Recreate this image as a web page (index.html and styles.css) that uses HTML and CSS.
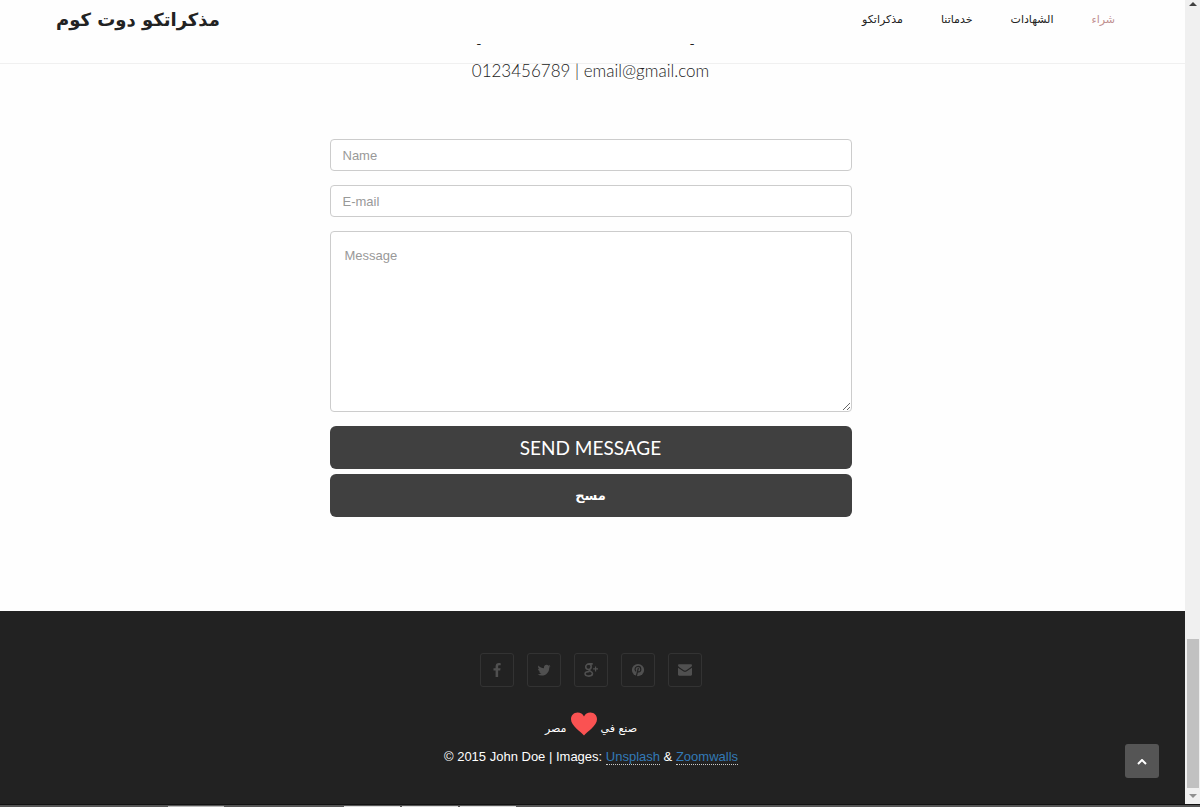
FILE: index.html
```html
<!DOCTYPE html>
<html lang="en">
<head>
  <meta charset="UTF-8" />
  <meta name="viewport" content="width=device-width, initial-scale=1" />
  <title>مذكراتكو دوت كوم</title>
  <link rel="stylesheet" href="styles.css">
</head>
<body>

  <div class="viewport">
    <div class="page">
      <header class="navbar">
        <a class="brand" href="#" lang="ar" dir="rtl">مذكراتكو دوت كوم</a>
        <nav lang="ar">
          <a href="#home">مذكراتكو</a>
          <a href="#services">خدماتنا</a>
          <a href="#testimonials">الشهادات</a>
          <a href="#buy" class="active">شراء</a>
        </nav>
        <div class="marks"><span>-</span><span>-</span></div>
      </header>

      <main class="contact">
        <p class="details">0123456789 | email@gmail.com</p>
        <form class="contact-form">
          <input type="text" class="field" placeholder="Name" aria-label="Name" />
          <input type="email" class="field" placeholder="E-mail" aria-label="E-mail" />
          <textarea class="field message" placeholder="Message" aria-label="Message"></textarea>
          <div class="buttons">
            <button type="submit" class="btn">SEND MESSAGE</button>
            <button type="reset" class="btn btn-clear" lang="ar">مسح</button>
          </div>
        </form>
      </main>

      <footer class="footer">
        <div class="social">
          <a href="#" aria-label="Facebook">
            <svg viewBox="0 0 16 16"><path d="M12.200.2v2.500h-1.500c-1.200 0-1.400.6-1.400 1.400v1.800h2.800l-.4 2.800H9.300V16H6.400V8.700H4V5.900h2.400V3.800C6.400 1.400 7.900 0 10 0c1 0 1.900.1 2.200.2z"/></svg>
          </a>
          <a href="#" aria-label="Twitter">
            <svg viewBox="0 0 16 16"><path d="M15.500 3.700c-.4.600-.9 1.100-1.500 1.500v.4c0 4-3 8.700-8.700 8.700-1.700 0-3.300-.5-4.700-1.300 1.600.2 3.200-.3 4.500-1.300-1.300 0-2.400-.9-2.800-2.100.5.100.9.100 1.400-.1-1.400-.3-2.500-1.500-2.500-3 .4.200.9.400 1.400.4C1.300 6 .9 4.200 1.700 2.800c1.500 1.900 3.800 3.100 6.300 3.200C7.500 4 9 2.100 11 2.100c.9 0 1.700.4 2.200 1 .7-.1 1.400-.4 1.900-.7-.2.700-.7 1.300-1.300 1.700.6-.1 1.200-.2 1.700-.4z"/></svg>
          </a>
          <a href="#" aria-label="Google Plus">
            <svg viewBox="0 0 16 16"><path fill="none" stroke="currentColor" stroke-width="1.800" d="M10 1H6C3.600 1 2 2.500 2 4.400s1.300 3 3.100 3 3.100-1.200 3.100-3C8.200 2.600 7.400 1.200 6 1M5.800 7.400c-1 1.700 3.900 1.900 3.900 4.700 0 1.800-1.600 2.900-4.100 2.900S1.200 14 1.200 12.400c0-1.900 2-2.700 5-2.700"/><path d="M12.500 4h1.400v2.100H16v1.400h-2.100v2.100h-1.400V7.500h-2.100V6.100h2.100z"/></svg>
          </a>
          <a href="#" aria-label="Pinterest">
            <svg viewBox="0 0 16 16"><circle cx="8" cy="8" r="7"/><path fill="none" stroke="#222" stroke-width="1.400" stroke-linecap="round" d="M5.300 9C3.500 6.300 5.500 3.900 8.300 3.900c3.800 0 3.800 6.300.5 6.300-1 0-1.400-.8-1.400-.8M8.300 6.200L6.300 14.500"/></svg>
          </a>
          <a href="#" aria-label="Email">
            <svg viewBox="0 0 16 16"><path d="M1.300 1.500h13.400c.7 0 1.300.5 1.300 1.200 0 .8-.6 1.500-1.200 2L9.500 8.300c-.9.700-2.100.7-3 0L1.200 4.700C.6 4.200 0 3.500 0 2.700c0-.7.600-1.200 1.300-1.200zM0 5.300l6 4.200c1.200.8 2.800.8 4 0l6-4.200v7.900c0 .8-.6 1.300-1.300 1.300H1.300C.6 14.500 0 14 0 13.200z"/></svg>
          </a>
        </div>
        <p class="made" lang="ar" dir="rtl">
          <span>صنع في</span>
          <svg class="heart" viewBox="0 0 26 23"><path d="M13 23C10 19 0 13.500 0 6.700 0 2.800 2.900 0 6.600 0 9.500 0 11.800 1.400 13 4 14.200 1.400 16.500 0 19.400 0 23.100 0 26 2.800 26 6.700 26 13.500 16 19 13 23z"/></svg>
          <span>مصر</span>
        </p>
        <p class="copyright">© 2015 John Doe | Images: <a href="#">Unsplash</a> &amp; <a href="#">Zoomwalls</a></p>
        <button class="to-top" aria-label="Back to top">
          <svg viewBox="0 0 10 6"><path d="M1 5l4-4 4 4"/></svg>
        </button>
      </footer>
    </div>

    <div class="scrollbar">
      <svg class="arrow" viewBox="0 0 8 5"><path d="M0 5l4-4 4 4z"/></svg>
      <div class="track"><div class="thumb"></div></div>
      <svg class="arrow down" viewBox="0 0 8 5"><path d="M0 0l4 4 4-4z"/></svg>
    </div>
  </div>

  <div class="taskbar">
    <span class="tab"></span>
    <span class="tab open"></span>
    <span class="tab open"></span>
    <span class="tab open"></span>
  </div>

</body>
</html>
```

FILE: styles.css
```css
* {
  margin: 0; padding: 0; box-sizing: border-box;
}

body {
  min-height: 100vh;
  display: flex;
  flex-direction: column;
  background: #fefefe;
  font-family: 'Liberation Sans', 'DejaVu Sans', sans-serif;
  font-size: 13px;
  color: #222;
}

.viewport {
  flex: 1;
  display: flex;
}

.page {
  flex: 1;
  display: flex;
  flex-direction: column;
}

/* Top bar */
.navbar {
  display: grid;
  grid-template-columns: 1fr auto;
  grid-template-rows: 38px 12px;
  align-items: center;
  padding: 0 70px 13px 56px;
  border-bottom: 1px solid #f0f0f0;
  font-family: 'DejaVu Sans', sans-serif;
}

.navbar a {
  text-decoration: none;
  color: #222;
}

.brand {
  justify-self: start;
  font-size: 18px;
  font-weight: 700;
}

.navbar nav {
  display: flex;
  gap: 38px;
}

.navbar nav a {
  font-size: 11px;
}

.navbar nav a.active {
  color: #c09090;
}

.marks {
  grid-column: 1 / -1;
  justify-self: center;
  width: 218px;
  display: flex;
  justify-content: space-between;
  line-height: 12px;
}

/* Contact form */
.contact {
  display: flex;
  flex-direction: column;
  align-items: center;
  padding: 0 19px 94px 15px;
}

.details {
  font-family: Lato, sans-serif;
  font-size: 17px;
  font-weight: 300;
  line-height: 14px;
  margin-bottom: 61px;
}

.contact-form {
  width: 100%;
  max-width: 522px;
  display: flex;
  flex-direction: column;
  gap: 14px;
}

.field {
  width: 100%;
  height: 32px;
  padding: 4px 12px;
  border: 1px solid #ccc;
  border-radius: 4px;
  background: #fff;
  font-family: 'Liberation Sans', sans-serif;
  font-size: 13px;
  color: #555;
}

.field::placeholder {
  color: #999;
}

.message {
  height: 181px;
  padding: 16px 14px;
  resize: vertical;
}

.buttons {
  display: flex;
  flex-direction: column;
  gap: 5px;
}

.btn {
  height: 43px;
  border: none;
  border-radius: 6px;
  background: #404040;
  color: #fff;
  font-family: Lato, sans-serif;
  font-size: 19px;
  cursor: pointer;
}

.btn:hover {
  background: #333;
}

.btn-clear {
  font-family: 'DejaVu Sans', sans-serif;
  font-size: 13px;
  font-weight: 700;
}

/* Footer */
.footer {
  flex: 1;
  position: relative;
  display: flex;
  flex-direction: column;
  align-items: center;
  padding: 42px 18px 36px 15px;
  background: #222;
  color: #fff;
}

.social {
  display: flex;
  gap: 13px;
  margin-bottom: 25px;
}

.social a {
  width: 34px;
  height: 34px;
  display: flex;
  align-items: center;
  justify-content: center;
  border: 1px solid #333;
  border-radius: 3px;
  color: #505050;
}

.social svg {
  width: 14px;
  height: 14px;
  fill: currentColor;
}

.made {
  display: flex;
  align-items: flex-end;
  gap: 4px;
  margin-bottom: 13px;
  font-family: 'DejaVu Sans', sans-serif;
  font-size: 11px;
  line-height: 14px;
}

.heart {
  width: 26px;
  height: 24px;
  fill: #fa5252;
}

.copyright {
  line-height: 16px;
}

.copyright a {
  color: #337ab7;
  text-decoration: none;
  border-bottom: 1px dotted #ccc;
}

.to-top {
  position: absolute;
  right: 26px;
  bottom: 26px;
  width: 34px;
  height: 34px;
  border: none;
  border-radius: 3px;
  background: #555;
  cursor: pointer;
}

.to-top svg {
  width: 10px;
  height: 6px;
  fill: none;
  stroke: #fff;
  stroke-width: 2;
  vertical-align: middle;
}

/* Scrollbar */
.scrollbar {
  width: 15px;
  display: flex;
  flex-direction: column;
  align-items: center;
  padding: 1px 0 5px;
  background: #f0f0f0;
}

.arrow {
  width: 8px;
  height: 5px;
  fill: #404040;
}

.arrow.down {
  fill: #909090;
}

.track {
  flex: 1;
  width: 12px;
  display: flex;
  flex-direction: column;
  justify-content: flex-end;
  padding-bottom: 6px;
}

.thumb {
  height: 19%;
  background: #c1c1c1;
}

/* Edge of the desktop taskbar */
.taskbar {
  height: 3px;
  display: flex;
  gap: 2px;
  padding: 1px 0 0 168px;
  background: #555;
  border-top: 1px solid #111;
}

.tab {
  width: 56px;
  background: #bbb;
  margin-right: 118px;
}

.tab.open {
  margin-right: 0;
  background: #ddd;
}
```
